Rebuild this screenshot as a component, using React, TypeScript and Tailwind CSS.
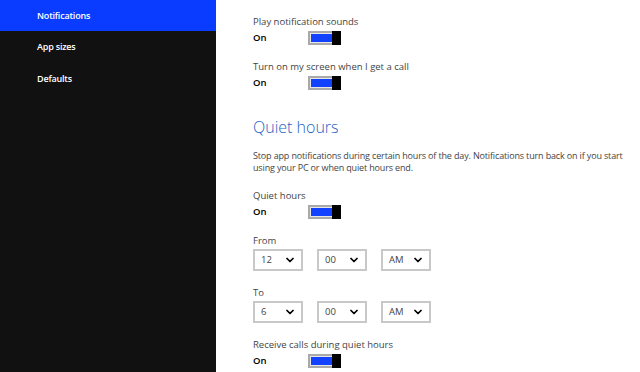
import { ChevronDown } from 'lucide-react';

const navItems = ['Notifications', 'App sizes', 'Defaults'];

function Toggle() {
  return (
    <div className="flex h-[14px] w-[33px] border-2 border-[#a9a9a9] bg-[#e6e6e6] p-[1px]">
      <div className="flex-1 bg-[#1242ff]" />
      <div className="-my-[3px] -mr-[3px] w-[9px] bg-black" />
    </div>
  );
}

function ToggleRow({ label }: { label: string }) {
  return (
    <div>
      <p className="text-[9.5px] leading-[15px] text-[#444]">{label}</p>
      <div className="mt-[1px] flex h-[15px] items-center">
        <span className="w-[55px] text-[9.5px] font-semibold leading-[15px] text-black">
          On
        </span>
        <Toggle />
      </div>
    </div>
  );
}

function Select({ value }: { value: string }) {
  return (
    <div className="flex h-[22px] w-[50px] items-center justify-between border-2 border-[#c8c8c8] bg-white pl-[6px] pr-[5px]">
      <span className="text-[9.5px] text-[#444]">{value}</span>
      <ChevronDown size={12} strokeWidth={3.5} className="text-black" />
    </div>
  );
}

function TimeRow({ label, hour }: { label: string; hour: string }) {
  return (
    <div>
      <p className="text-[9.5px] leading-[15px] text-[#444]">{label}</p>
      <div className="mt-[1px] flex gap-[14px]">
        <Select value={hour} />
        <Select value="00" />
        <Select value="AM" />
      </div>
    </div>
  );
}

export default function App() {
  return (
    <div
      className="flex h-[372px] w-[640px] overflow-hidden bg-white"
      style={{ fontFamily: '"Open Sans", "Noto Sans", sans-serif' }}
    >
      <nav className="flex w-[216px] flex-col bg-[#111111]">
        {navItems.map((item, i) => (
          <div
            key={item}
            className={
              i === 0
                ? 'flex h-[31px] items-center bg-[#0a3cff] pl-[37px] text-[9px] font-semibold tracking-[-0.2px] text-white'
                : 'flex h-[32px] items-center pl-[37px] text-[9px] font-semibold tracking-[-0.2px] text-white'
            }
          >
            {item}
          </div>
        ))}
      </nav>

      <main className="flex-1 pl-[37px] pt-[14px]">
        <ToggleRow label="Play notification sounds" />
        <div className="mt-[14px]">
          <ToggleRow label="Turn on my screen when I get a call" />
        </div>

        <h2 className="mt-[24px] text-[16px] font-light leading-[26px] text-[#1e5fc4]">
          Quiet hours
        </h2>
        <p className="mt-[10px] w-[380px] text-[9px] leading-[12px] tracking-[-0.15px] text-[#444]">
          Stop app notifications during certain hours of the day. Notifications
          turn back on if you start using your PC or when quiet hours end.
        </p>

        <div className="mt-[14px]">
          <ToggleRow label="Quiet hours" />
        </div>
        <div className="mt-[14px]">
          <TimeRow label="From" hour="12" />
        </div>
        <div className="mt-[14px]">
          <TimeRow label="To" hour="6" />
        </div>
        <div className="mt-[14px]">
          <ToggleRow label="Receive calls during quiet hours" />
        </div>
      </main>
    </div>
  );
}
